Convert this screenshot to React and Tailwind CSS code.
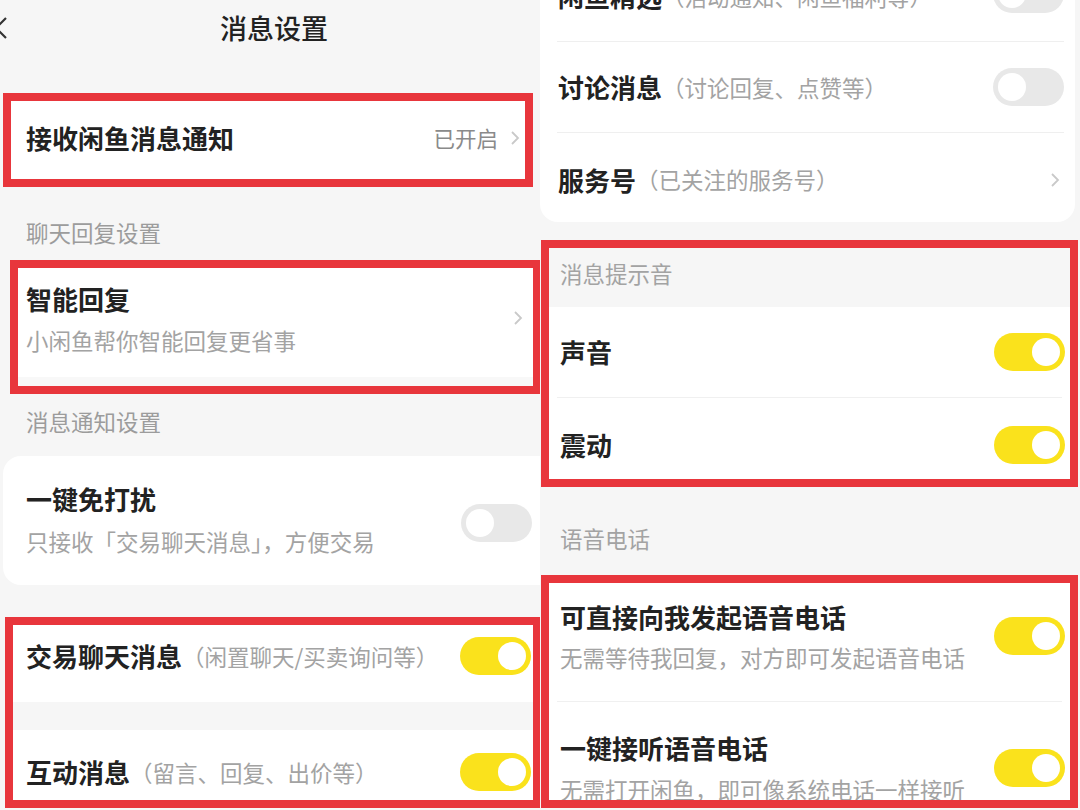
import React from "react";

const font = { fontFamily: '"Noto Sans CJK SC", "Noto Sans", sans-serif' };

const Toggle = ({ on }) => (
  <div
    className={
      on
        ? "w-[71px] h-[38px] rounded-full bg-[#fae21c] flex items-center justify-end pr-[5px] shrink-0"
        : "w-[71px] h-[38px] rounded-full bg-[#e8e8e8] flex items-center justify-start pl-[5px] shrink-0"
    }
  >
    <div className="w-[28px] h-[28px] rounded-full bg-white" />
  </div>
);

const Chevron = ({ className }) => (
  <svg className={className} width="10" height="16" viewBox="0 0 10 16">
    <polyline points="2,2 8,8 2,14" fill="none" stroke="#c9c9c9" strokeWidth="1.8" />
  </svg>
);

const Title = ({ children }) => (
  <span className="text-[26px] leading-none font-semibold text-[#222] whitespace-nowrap">{children}</span>
);

const Note = ({ children }) => (
  <span className="text-[22.5px] leading-none text-[#a3a3a3] whitespace-nowrap">{children}</span>
);

const LeftPanel = () => {
  return (
    <div className="w-[540px] h-[810px] overflow-hidden bg-[#f6f6f6] shrink-0">
      {/* top bar */}
      <div className="relative h-[55px] flex items-center justify-center">
        <svg className="absolute left-[-7px] top-[16px]" width="16" height="24" viewBox="0 0 16 24">
          <polyline points="13,2 3,12 13,22" fill="none" stroke="#333" strokeWidth="2.2" />
        </svg>
        <span className="ml-[8px] text-[27px] leading-none font-medium text-[#222]">消息设置</span>
      </div>

      <div className="mt-[38px] ml-[3px] w-[530px] h-[94px] border-[8px] border-[#e8363c] bg-white flex items-center pl-[15px] pr-[5px] pb-[4px]">
        <Title>接收闲鱼消息通知</Title>
        <span className="ml-auto text-[21.5px] leading-none text-[#8a8a8a]">已开启</span>
        <Chevron className="ml-[12px]" />
      </div>

      <div className="h-[73px] pt-[34px] pl-[26px] text-[22.5px] leading-[22px] text-[#9c9c9c]">聊天回复设置</div>

      <div className="ml-[10px] w-[531px] h-[134px] border-[8px] border-[#e8363c] bg-[#f8f8f8]">
        <div className="h-[109px] bg-white flex items-start pt-[18px] pl-[8px] pr-[10px]">
          <div className="flex flex-col">
            <Title>智能回复</Title>
            <div className="mt-[17px]">
              <Note>小闲鱼帮你智能回复更省事</Note>
            </div>
          </div>
          <Chevron className="ml-auto mt-[24px]" />
        </div>
      </div>

      <div className="h-[62px] pt-[16px] pl-[26px] text-[22.5px] leading-[22px] text-[#9c9c9c]">消息通知设置</div>

      <div className="ml-[3px] w-[560px] h-[129px] rounded-[18px] bg-white flex items-center justify-between pl-[23px] pr-[31px]">
        <div className="flex flex-col">
          <Title>一键免打扰</Title>
          <div className="mt-[18px]">
            <Note>只接收「交易聊天消息」，方便交易</Note>
          </div>
        </div>
        <div className="mt-[4px]">
          <Toggle on={false} />
        </div>
      </div>

      <div className="mt-[32px] ml-[5px] w-[536px] h-[191px] border-[8px] border-[#e8363c] bg-white overflow-hidden">
        <div className="h-[77px] flex items-start pt-[12px] pl-[13px] pr-[2px]">
          <div className="flex items-center h-[38px]">
            <Title>交易聊天消息</Title>
            <Note>（闲置聊天/买卖询问等）</Note>
          </div>
          <div className="ml-auto">
            <Toggle on />
          </div>
        </div>
        <div className="h-[28px] bg-[#f6f6f6]" />
        <div className="h-[69px] flex items-start pt-[23px] pl-[13px] pr-[2px]">
          <div className="flex items-center h-[38px]">
            <Title>互动消息</Title>
            <Note>（留言、回复、出价等）</Note>
          </div>
          <div className="ml-auto">
            <Toggle on />
          </div>
        </div>
      </div>
    </div>
  );
};

const RightPanel = () => {
  return (
    <div className="w-[540px] h-[810px] overflow-hidden bg-[#f6f6f6] shrink-0">
      <div className="-mt-[49px] w-[535px] bg-white rounded-b-[18px]">
        <div className="ml-[17px] mr-[11px] h-[91px] border-b border-[#efefef] flex items-center pl-[1px]">
          <Title>闲鱼精选</Title>
          <Note>（活动通知、闲鱼福利等）</Note>
          <div className="ml-auto mt-[-4px]">
            <Toggle on={false} />
          </div>
        </div>
        <div className="ml-[17px] mr-[11px] h-[91px] border-b border-[#efefef] flex items-center pl-[1px]">
          <Title>讨论消息</Title>
          <Note>（讨论回复、点赞等）</Note>
          <div className="ml-auto">
            <Toggle on={false} />
          </div>
        </div>
        <div className="ml-[17px] mr-[11px] h-[89px] flex items-center pl-[1px] pt-[4px]">
          <Title>服务号</Title>
          <Note>（已关注的服务号）</Note>
          <Chevron className="ml-auto mr-[4px]" />
        </div>
      </div>

      <div className="mt-[18px] ml-[1px] w-[537px] h-[247px] border-[8px] border-[#e8363c] bg-white">
        <div className="h-[59px] bg-[#f6f6f6] flex items-center pl-[11px] pb-[9px] text-[22.5px] leading-none text-[#a3a3a3]">
          消息提示音
        </div>
        <div className="h-[90px] flex items-center pl-[11px] pr-[5px]">
          <Title>声音</Title>
          <div className="ml-auto">
            <Toggle on />
          </div>
        </div>
        <div className="mx-[8px] border-t border-[#f0f0f0]" />
        <div className="h-[81px] flex items-center pl-[11px] pr-[5px] pt-[12px]">
          <Title>震动</Title>
          <div className="ml-auto">
            <Toggle on />
          </div>
        </div>
      </div>

      <div className="h-[88px] pt-[40px] pl-[20px] text-[22.5px] leading-[22px] text-[#a3a3a3]">语音电话</div>

      <div className="ml-[1px] w-[537px] h-[233px] border-[8px] border-[#e8363c] bg-white overflow-hidden">
        <div className="h-[118px] flex items-start pt-[21px] pl-[11px] pr-[5px]">
          <div className="flex flex-col">
            <Title>可直接向我发起语音电话</Title>
            <div className="mt-[16px]">
              <Note>无需等待我回复，对方即可发起语音电话</Note>
            </div>
          </div>
          <div className="ml-auto mt-[13px]">
            <Toggle on />
          </div>
        </div>
        <div className="mx-[8px] border-t border-[#f0f0f0]" />
        <div className="h-[120px] flex items-start pt-[33px] pl-[11px] pr-[5px]">
          <div className="flex flex-col">
            <Title>一键接听语音电话</Title>
            <div className="mt-[17px]">
              <Note>无需打开闲鱼，即可像系统电话一样接听</Note>
            </div>
          </div>
          <div className="ml-auto mt-[14px]">
            <Toggle on />
          </div>
        </div>
      </div>
    </div>
  );
};

export default function App() {
  return (
    <div className="w-[1080px] h-[810px] flex overflow-hidden bg-[#f6f6f6]" style={font}>
      <LeftPanel />
      <RightPanel />
    </div>
  );
}
